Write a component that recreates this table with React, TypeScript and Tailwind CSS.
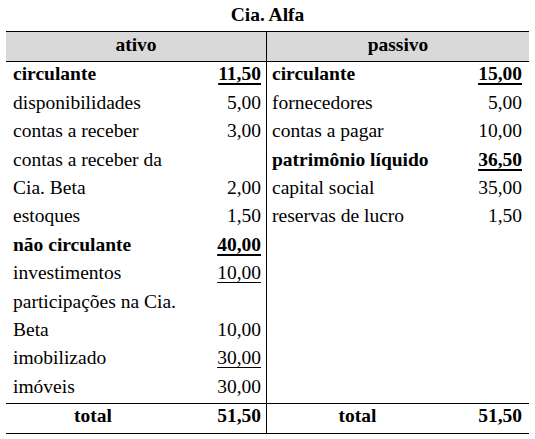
import React from 'react'

interface Row {
  label: string
  value?: string
  bold?: boolean
  line?: 'thick' | 'thin'
}

const ativo: Row[] = [
  { label: 'circulante', value: '11,50', bold: true, line: 'thick' },
  { label: 'disponibilidades', value: '5,00' },
  { label: 'contas a receber', value: '3,00' },
  { label: 'contas a receber da' },
  { label: 'Cia. Beta', value: '2,00' },
  { label: 'estoques', value: '1,50' },
  { label: 'não circulante', value: '40,00', bold: true, line: 'thick' },
  { label: 'investimentos', value: '10,00', line: 'thin' },
  { label: 'participações na Cia.' },
  { label: 'Beta', value: '10,00' },
  { label: 'imobilizado', value: '30,00', line: 'thin' },
  { label: 'imóveis', value: '30,00' },
]

const passivo: Row[] = [
  { label: 'circulante', value: '15,00', bold: true, line: 'thick' },
  { label: 'fornecedores', value: '5,00' },
  { label: 'contas a pagar', value: '10,00' },
  { label: 'patrimônio líquido', value: '36,50', bold: true, line: 'thick' },
  { label: 'capital social', value: '35,00' },
  { label: 'reservas de lucro', value: '1,50' },
]

function Line({ row, pl, pr }: { row: Row; pl: string; pr: string }) {
  return (
    <div className={`flex h-[28.4px] items-center justify-between pb-[4px] ${pl} ${pr} ${row.bold ? 'font-bold' : ''}`}>
      <span className="whitespace-nowrap">{row.label}</span>
      {row.value && (
        <span
          className={
            row.line === 'thick'
              ? 'underline decoration-2 underline-offset-[3px]'
              : row.line === 'thin'
              ? 'underline decoration-1 underline-offset-[3px]'
              : ''
          }
        >
          {row.value}
        </span>
      )}
    </div>
  )
}

export default function App() {
  return (
    <div
      className="w-[535px] h-[439px] bg-white text-black text-[19.5px] leading-none"
      style={{ fontFamily: '"Liberation Serif", "Times New Roman", serif' }}
    >
      <div className="ml-[6px] w-[523px]">
        {/* titulo */}
        <div className="h-[31px] flex items-center justify-center font-bold pb-[1px]">Cia. Alfa</div>

        <div className="border-t border-b border-black">
          {/* cabeçalho */}
          <div className="grid grid-cols-[261px_262px] bg-[#d9d9d9] border-b border-black font-bold">
            <div className="h-[29px] flex items-center justify-center border-r border-black pb-[3px]">ativo</div>
            <div className="h-[29px] flex items-center justify-center pb-[3px]">passivo</div>
          </div>

          {/* corpo */}
          <div className="grid grid-cols-[261px_262px] h-[341px]">
            <div className="border-r border-black">
              {ativo.map((r, i) => (
                <Line key={i} row={r} pl="pl-[7px]" pr="pr-[5px]" />
              ))}
            </div>
            <div>
              {passivo.map((r, i) => (
                <Line key={i} row={r} pl="pl-[5px]" pr="pr-[7px]" />
              ))}
            </div>
          </div>

          {/* total */}
          <div className="grid grid-cols-[261px_262px] border-t border-black font-bold h-[30px]">
            <div className="flex items-center border-r border-black pr-[5px] pb-[5px]">
              <span className="w-[174px] text-center">total</span>
              <span className="ml-auto">51,50</span>
            </div>
            <div className="flex items-center pr-[7px] pb-[5px]">
              <span className="w-[181px] text-center">total</span>
              <span className="ml-auto">51,50</span>
            </div>
          </div>
        </div>
      </div>
    </div>
  )
}
